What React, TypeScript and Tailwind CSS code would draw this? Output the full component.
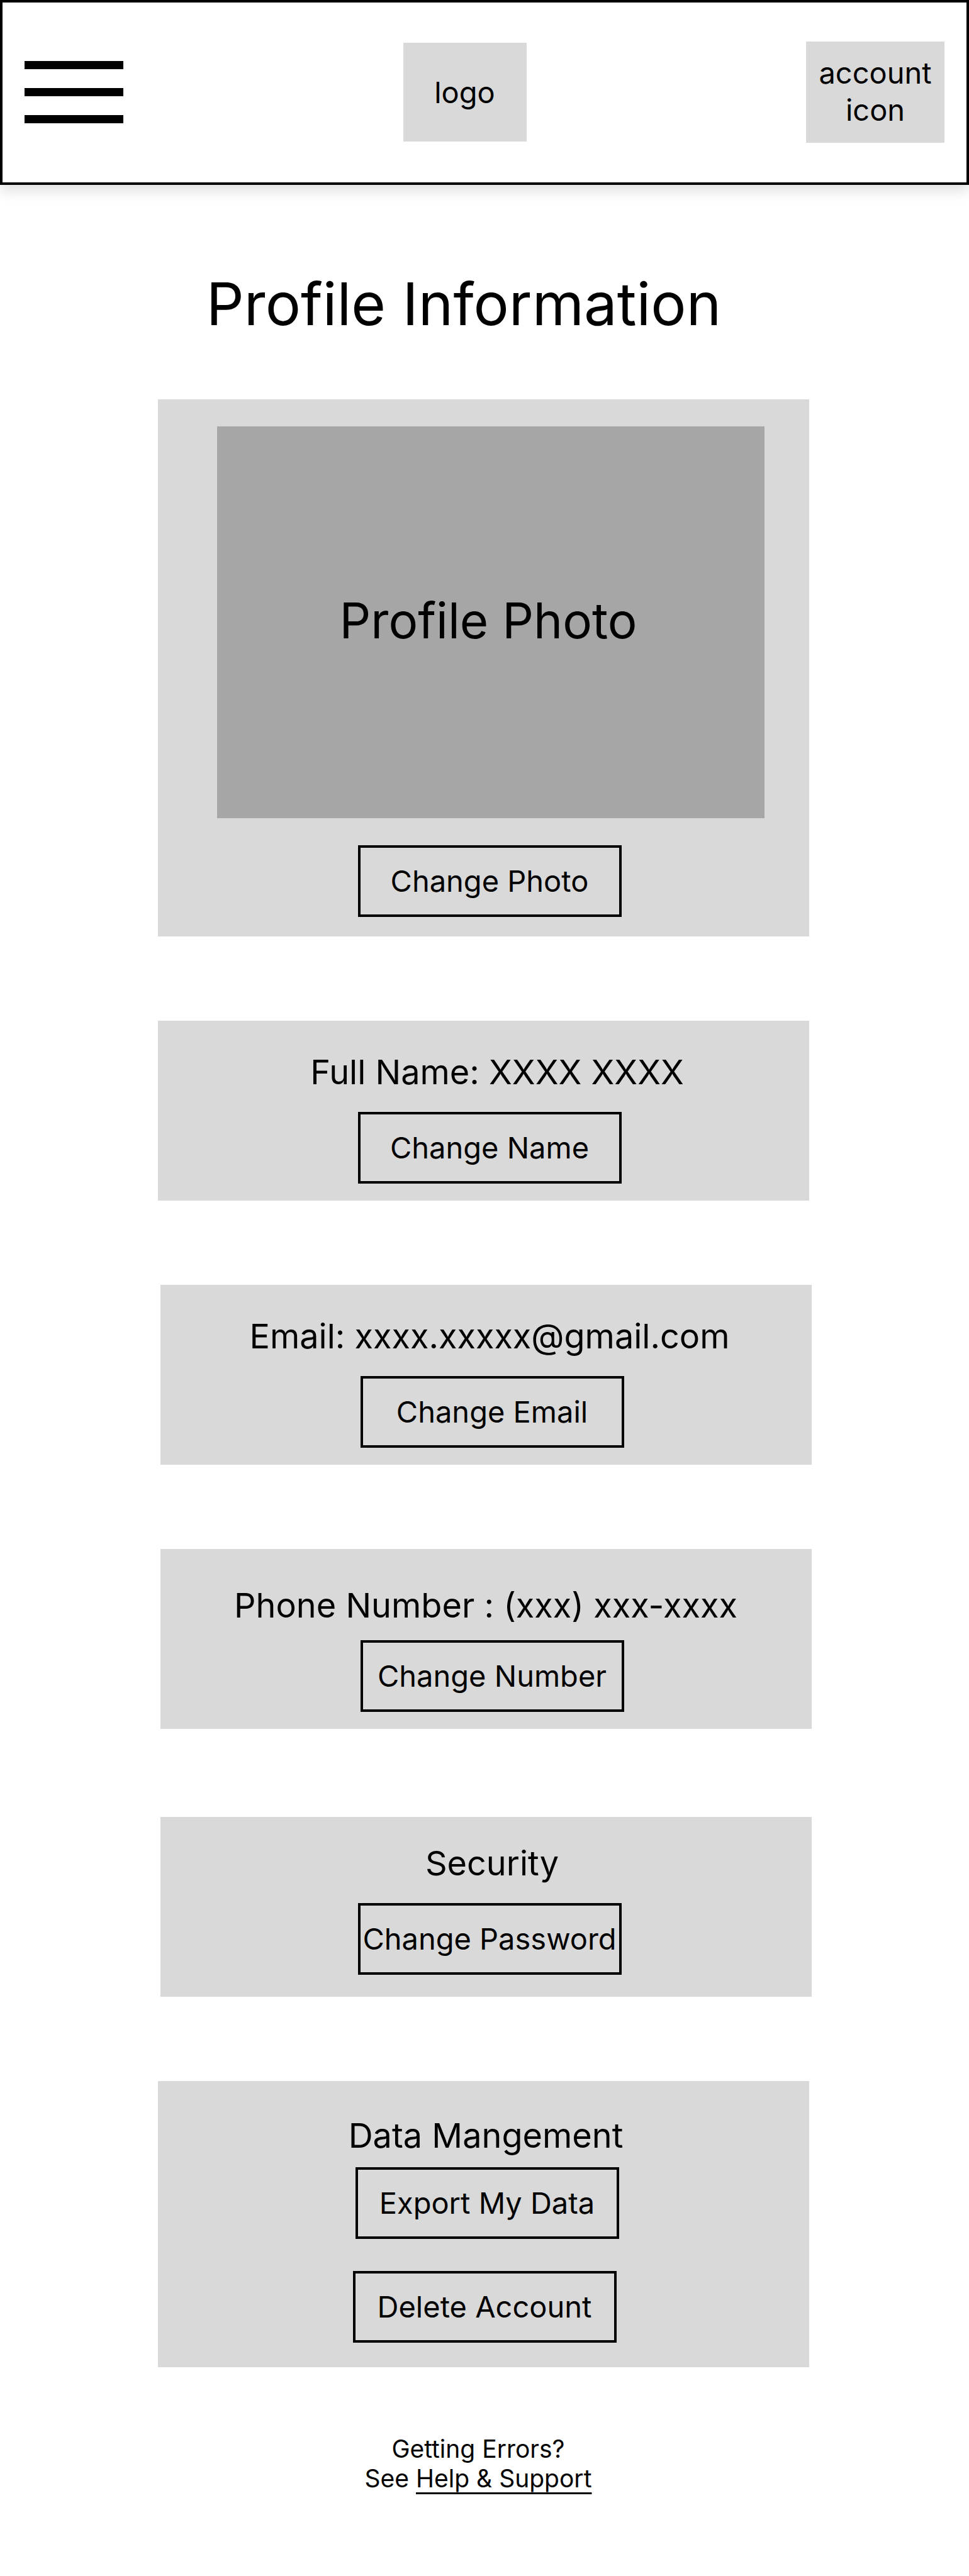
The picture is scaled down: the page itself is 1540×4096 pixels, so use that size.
import React from 'react';

type BoxProps = { children: React.ReactNode; className?: string };

function ActionButton({ children, className = '' }: BoxProps) {
  return (
    <button
      type="button"
      className={`flex w-full max-w-[419px] cursor-pointer items-center justify-center border-4 border-black py-6 text-[47px] leading-[58px] whitespace-nowrap ${className}`}
    >
      {children}
    </button>
  );
}

function Panel({ children, className = '' }: BoxProps) {
  return (
    <section className={`flex w-full max-w-[1035px] flex-col items-center bg-[#d9d9d9] ${className}`}>
      {children}
    </section>
  );
}

function FieldTitle({ children, className = '' }: BoxProps) {
  return <h2 className={`text-center text-[54px] leading-[67px] ${className}`}>{children}</h2>;
}

export default function App() {
  return (
    <div className="min-h-screen bg-white font-['Inter',sans-serif] text-black">
      <header className="flex items-center justify-between border-4 border-black px-[35px] pt-[62px] pb-[63px] shadow-[0_10px_20px_rgba(0,0,0,0.12)]">
        <button type="button" aria-label="Menu" className="flex w-[157px] cursor-pointer flex-col gap-[30px]">
          <span className="h-[13px] w-full bg-black" />
          <span className="h-[13px] w-full bg-black" />
          <span className="h-[13px] w-full bg-black" />
        </button>
        <div className="flex h-[157px] w-[196px] items-center justify-center bg-[#d9d9d9] text-[47px] leading-[58px]">
          logo
        </div>
        <button
          type="button"
          className="flex w-[220px] cursor-pointer items-center justify-center bg-[#d9d9d9] pt-5 pb-[23px] text-center text-[47px] leading-[59px]"
        >
          account
          <br />
          icon
        </button>
      </header>

      <main className="flex flex-col items-center">
        <h1 className="mt-[132px] mr-[66px] text-[94px] leading-[114px]">Profile Information</h1>

        <div className="mt-[95px] flex w-full flex-col items-center gap-[134px] pr-1">
          <Panel className="pt-[43px] pb-[31px]">
            <div className="ml-6 flex h-[623px] w-full max-w-[870px] items-center justify-center bg-[#a6a6a6] pr-2 pb-1.5 text-[78px]">
              Profile Photo
            </div>
            <ActionButton className="mt-[43px] ml-5">Change Photo</ActionButton>
          </Panel>
          <Panel className="pt-12 pb-[27px]">
            <FieldTitle className="ml-11">Full Name: XXXX XXXX</FieldTitle>
            <ActionButton className="mt-[30px] ml-5">Change Name</ActionButton>
          </Panel>
        </div>

        <div className="mt-[134px] flex w-full flex-col items-center pl-1">
          <Panel className="pt-12 pb-[27px]">
            <FieldTitle className="ml-3">Email: xxxx.xxxxx@gmail.com</FieldTitle>
            <ActionButton className="mt-[30px] ml-5">Change Email</ActionButton>
          </Panel>
          <Panel className="mt-[134px] pt-14 pb-[27px]">
            <FieldTitle>Phone Number : (xxx) xxx-xxxx</FieldTitle>
            <ActionButton className="mt-[22px] ml-5">Change Number</ActionButton>
          </Panel>
          <Panel className="mt-[140px] pt-10 pb-[35px]">
            <FieldTitle className="ml-5">Security</FieldTitle>
            <ActionButton className="mt-[30px] ml-3">Change Password</ActionButton>
          </Panel>
        </div>

        <div className="mt-[134px] flex w-full flex-col items-center pr-1">
          <Panel className="pt-[53px] pb-[39px]">
            <FieldTitle className="ml-2">Data Mangement</FieldTitle>
            <ActionButton className="mt-[17px] ml-3">Export My Data</ActionButton>
            <ActionButton className="mt-[51px] ml-1">Delete Account</ActionButton>
          </Panel>
        </div>
      </main>

      <footer className="mt-[106px] pr-5 text-center text-[39px] leading-[47px]">
        <p>Getting Errors?</p>
        <p>
          See{' '}
          <a href="#help" className="underline decoration-[3px] underline-offset-8">
            Help &amp; Support
          </a>
        </p>
      </footer>
    </div>
  );
}
